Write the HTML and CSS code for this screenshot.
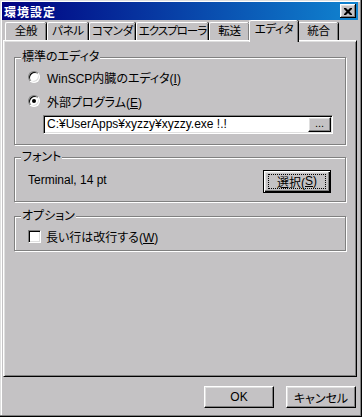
FILE: index.html
```html
<!DOCTYPE html>
<html lang="ja">
<head>
    <meta charset="UTF-8">
    <title>環境設定</title>
    <link rel="stylesheet" href="styles.css">
</head>
<body>
    <div class="window">
        <!-- タイトルバー -->
        <div class="titlebar">
            <span class="title">環境設定</span>
            <span class="close-btn">
                <svg width="8" height="7" viewBox="0 0 8 7"><path d="M0 0h2l2 2 2-2h2v1l-2.5 2.5L8 6v1H6L4 5 2 7H0V6l2.5-2.5L0 1z" fill="#000"/></svg>
            </span>
        </div>

        <!-- タブ -->
        <div class="tabs">
            <div class="tab tab-general">全般</div>
            <div class="tab tab-panels">パネル</div>
            <div class="tab tab-commander">コマンダ</div>
            <div class="tab tab-explorer">エクスプローラ</div>
            <div class="tab tab-transfer">転送</div>
            <div class="tab tab-editor active">エディタ</div>
            <div class="tab tab-integration">統合</div>
        </div>

        <div class="panel">
            <!-- 標準のエディタ -->
            <div class="group editor-group">
                <span class="group-label">標準のエディタ</span>
                <label class="option">
                    <span class="radio"></span>
                    <span>WinSCP内臓のエディタ(<u>I</u>)</span>
                </label>
                <label class="option">
                    <span class="radio checked"></span>
                    <span>外部プログラム(<u>E</u>)</span>
                </label>
                <div class="path-input">
                    <span class="path-text">C:¥UserApps¥xyzzy¥xyzzy.exe !.!</span>
                    <span class="btn browse-btn">...</span>
                </div>
            </div>

            <!-- フォント -->
            <div class="group font-group">
                <span class="group-label">フォント</span>
                <span class="font-name">Terminal, 14 pt</span>
                <span class="btn default-btn">選択(<u>S</u>)</span>
            </div>

            <!-- オプション -->
            <div class="group option-group">
                <span class="group-label">オプション</span>
                <label class="option">
                    <span class="checkbox"></span>
                    <span>長い行は改行する(<u>W</u>)</span>
                </label>
            </div>
        </div>

        <div class="dialog-buttons">
            <span class="btn dialog-btn">OK</span>
            <span class="btn dialog-btn">キャンセル</span>
        </div>
    </div>
</body>
</html>
```

FILE: styles.css
```css
:root {
    --face: #c4c2c4;
    --light: #dfdfdf;
    --shadow: #808080;
    --dark: #000;
}

* {
    box-sizing: border-box;
    margin: 0;
    padding: 0;
}

body {
    font-family: "Liberation Sans", "Noto Sans CJK JP", sans-serif;
    font-size: 12px;
    font-feature-settings: "palt";
    color: #000;
    background: var(--face);
}

.window {
    width: 362px;
    height: 417px;
    padding: 2px 4px 0 2px;
    background: var(--face);
    box-shadow: inset -1px -1px 0 var(--dark), inset -2px -2px 0 var(--shadow),
                inset 1px 1px 0 var(--light), inset 2px 2px 0 #fff;
}

.titlebar {
    height: 18px;
    display: flex;
    align-items: center;
    justify-content: space-between;
    padding: 0 2px 0 2px;
    background: linear-gradient(to right, #000080, #1084d0);
}

.title {
    color: #fff;
    font-weight: bold;
    font-size: 12px;
    letter-spacing: 1px;
}

.close-btn {
    width: 16px;
    height: 14px;
    display: flex;
    align-items: center;
    justify-content: center;
    background: var(--face);
    box-shadow: inset -1px -1px 0 var(--dark), inset 1px 1px 0 #fff,
                inset -2px -2px 0 var(--shadow), inset 2px 2px 0 var(--light);
}

.tabs {
    display: flex;
    align-items: flex-end;
    height: 20px;
    padding-left: 3px;
}

.tab {
    flex: none;
    white-space: nowrap;
    height: 18px;
    display: flex;
    align-items: center;
    justify-content: center;
    border-top: 1px solid #fff;
    border-left: 1px solid #fff;
    border-radius: 2px 2px 0 0;
    box-shadow: inset -1px 0 0 var(--shadow), 1px 0 0 var(--dark);
    margin-right: 1px;
    font-size: 11.5px;
    line-height: 1;
    letter-spacing: -0.3px;
}

.tab-general { width: 41px; }
.tab-panels { width: 41px; }
.tab-commander { width: 46px; }
.tab-explorer { width: 72px; letter-spacing: -1px; }
.tab-transfer { width: 40px; margin-right: 0; }
.tab-editor { width: 49px; }
.tab-integration { width: 40px; }

.tab.active {
    position: relative;
    z-index: 1;
    height: 22px;
    margin: 0 0 -2px 0;
    padding-bottom: 3px;
    background: var(--face);
}

.panel {
    width: 354px;
    height: 337px;
    margin-left: 1px;
    padding: 16px 0 0 10px;
    border: 1px solid;
    border-color: #fff var(--dark) var(--dark) #fff;
    box-shadow: inset 1px 1px 0 var(--light), inset -1px -1px 0 var(--shadow);
}

.group {
    position: relative;
    width: 332px;
    border: 1px solid var(--shadow);
    box-shadow: inset 1px 1px 0 #fff, 1px 1px 0 #fff;
}

.group-label {
    position: absolute;
    top: -8px;
    left: 6px;
    padding: 0 1px;
    background: var(--face);
    line-height: 14px;
}

.editor-group {
    height: 88px;
    padding: 11px 0 0 13px;
}

.option {
    display: flex;
    align-items: center;
    gap: 7px;
    height: 16px;
}

.editor-group .option + .option {
    margin-top: 8px;
}

.radio {
    position: relative;
    width: 12px;
    height: 12px;
    border-radius: 50%;
    background: #fff;
    border: 1px solid;
    border-color: var(--shadow) #fff #fff var(--shadow);
    box-shadow: inset 1px 1px 0 var(--dark), inset -1px -1px 0 var(--light);
}

.radio.checked::after {
    content: "";
    position: absolute;
    left: 3px;
    top: 3px;
    width: 4px;
    height: 4px;
    border-radius: 50%;
    background: #000;
}

.checkbox {
    width: 13px;
    height: 13px;
    background: #fff;
    border: 1px solid;
    border-color: var(--shadow) #fff #fff var(--shadow);
    box-shadow: inset 1px 1px 0 var(--dark), inset -1px -1px 0 var(--light);
}

.path-input {
    display: flex;
    align-items: stretch;
    width: 290px;
    height: 19px;
    margin: 6px 0 0 15px;
    background: #fff;
    border: 1px solid;
    border-color: var(--shadow) #fff #fff var(--shadow);
    padding: 1px;
    box-shadow: inset 1px 1px 0 var(--dark), inset -1px -1px 0 var(--light);
}

.path-text {
    flex: 1;
    padding-left: 2px;
    line-height: 15px;
    white-space: nowrap;
    overflow: hidden;
}

.btn {
    display: flex;
    align-items: center;
    justify-content: center;
    background: var(--face);
    border: 1px solid;
    border-color: #fff var(--dark) var(--dark) #fff;
    box-shadow: inset -1px -1px 0 var(--shadow), inset 1px 1px 0 var(--light);
}

.browse-btn {
    width: 23px;
    font-size: 11px;
    line-height: 1;
    padding-bottom: 3px;
}

.font-group {
    height: 45px;
    margin-top: 12px;
    padding: 0 14px 0 13px;
    display: flex;
    align-items: center;
    justify-content: space-between;
}

.font-name {
    margin-top: 1px;
}

.default-btn {
    position: relative;
    width: 68px;
    height: 23px;
    margin-top: 3px;
    border: 1px solid var(--dark);
    box-shadow: inset 1px 1px 0 #fff, inset -1px -1px 0 var(--dark),
                inset -2px -2px 0 var(--shadow), inset 2px 2px 0 var(--light);
}

.default-btn::after {
    content: "";
    position: absolute;
    inset: 3px 4px 3px 4px;
    border: 1px dotted #000;
}

.option-group {
    height: 35px;
    margin-top: 14px;
    padding: 11px 0 0 13px;
}

.option-group .option {
    gap: 5px;
}

.dialog-buttons {
    display: flex;
    justify-content: flex-end;
    gap: 12px;
    margin-top: 9px;
    padding-right: 2px;
}

.dialog-btn {
    width: 70px;
    height: 22px;
}
```
